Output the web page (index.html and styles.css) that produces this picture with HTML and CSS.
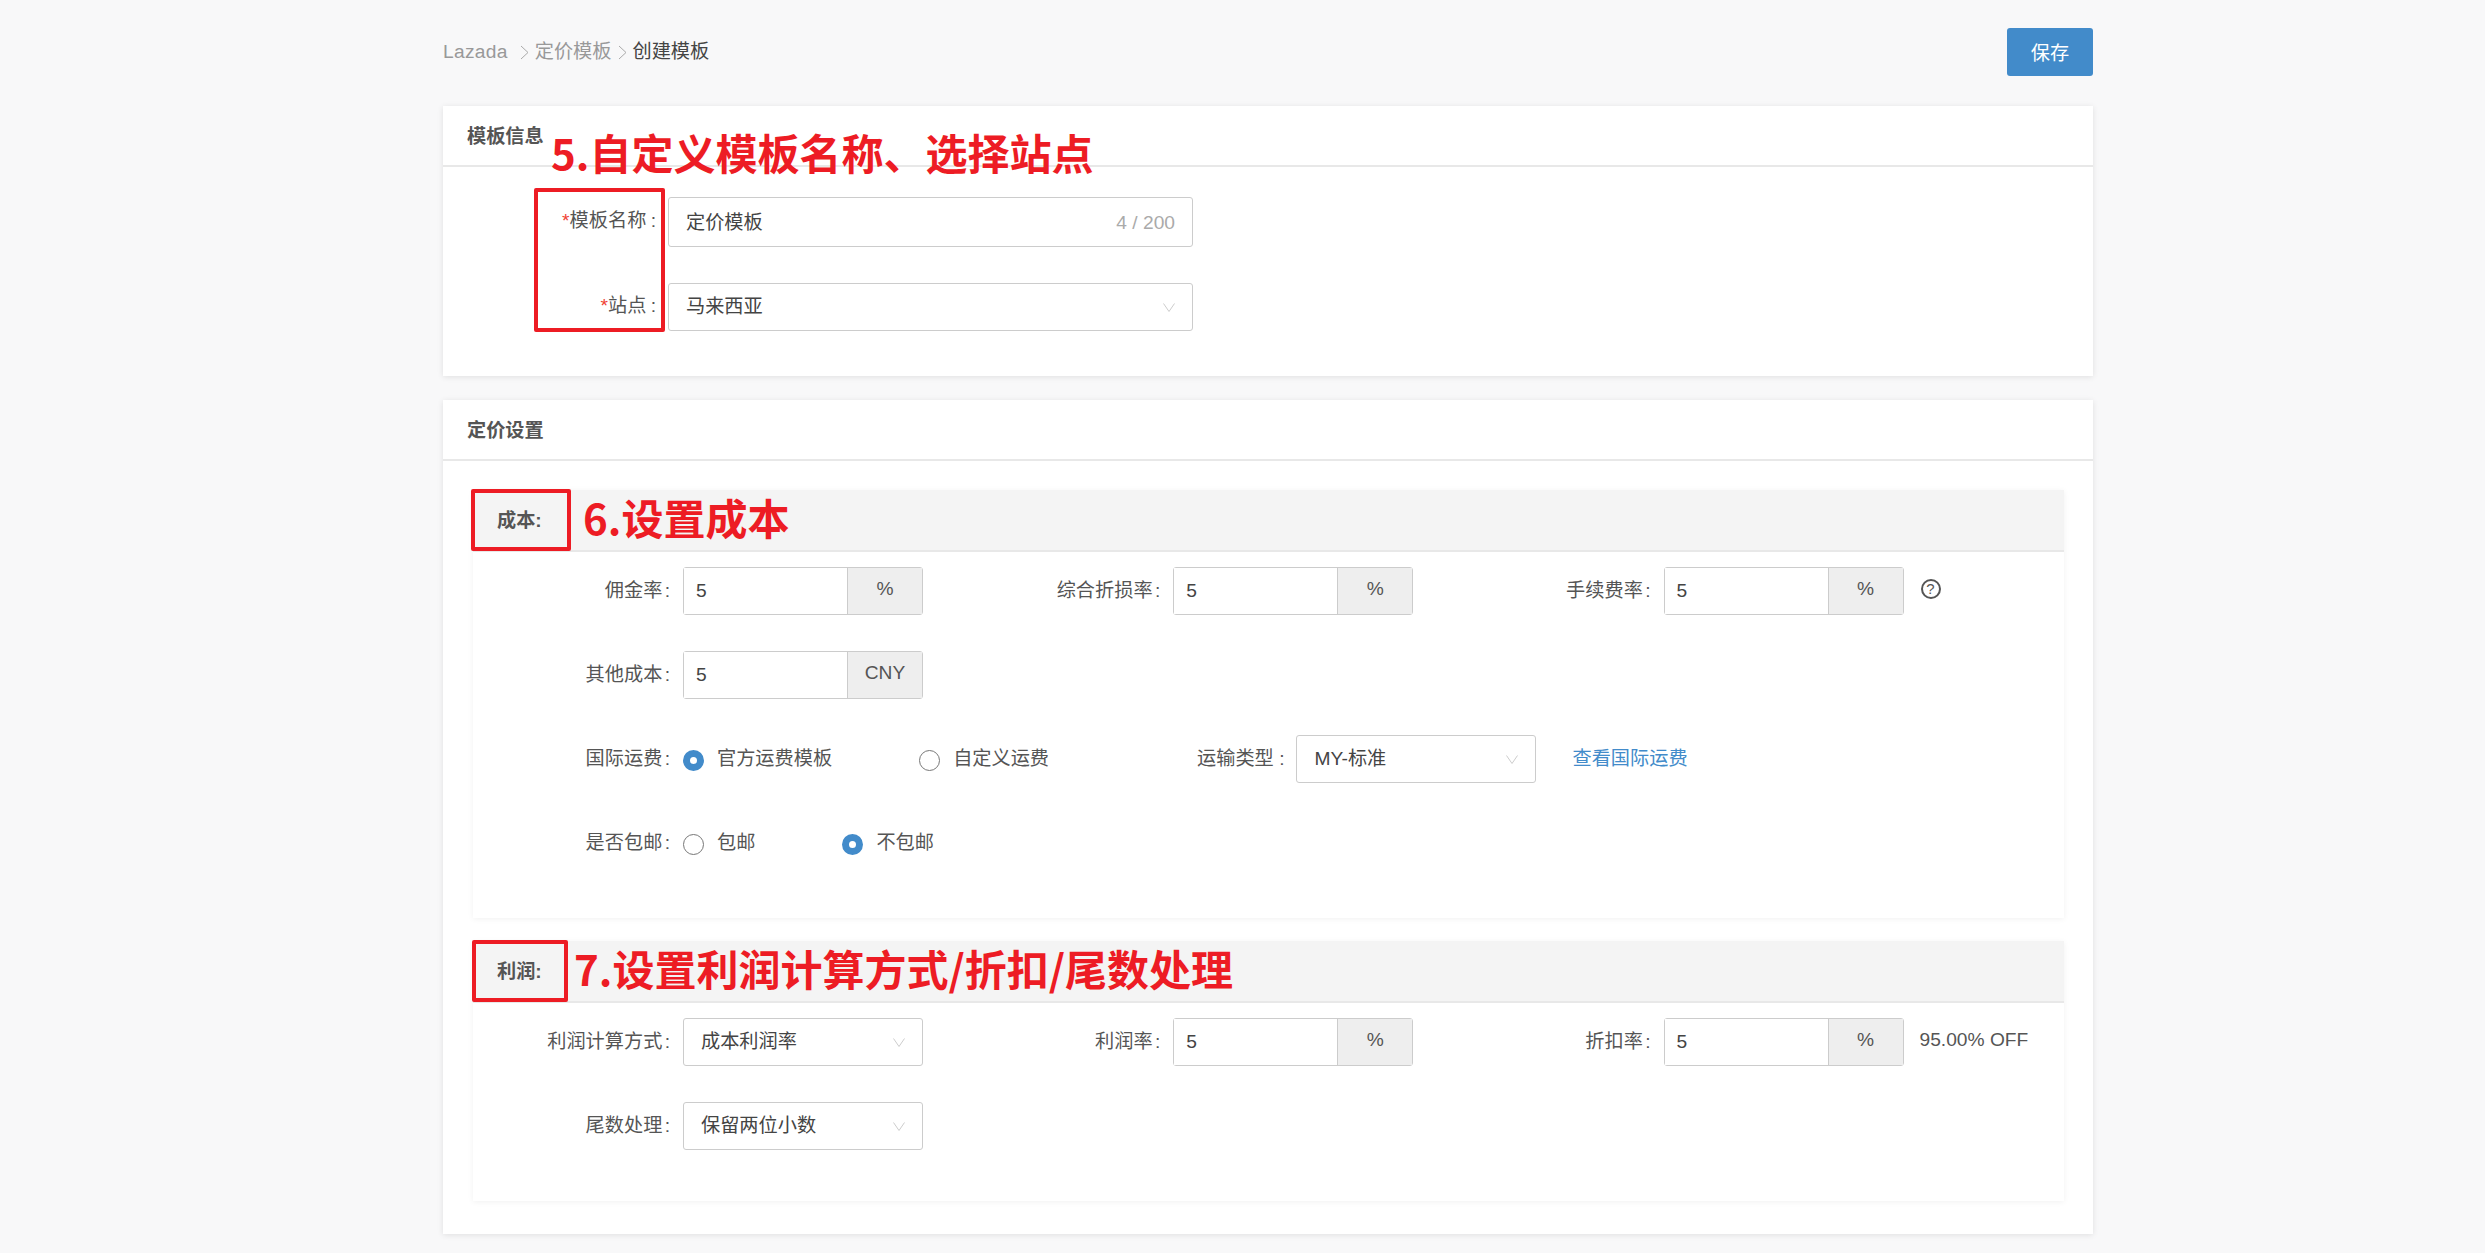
FILE: index.html
```html
<!DOCTYPE html>
<html lang="zh-CN">
  <head>
    <meta charset="UTF-8" />
    <meta name="viewport" content="width=device-width, initial-scale=1.0" />
    <title>创建模板</title>
    <link rel="stylesheet" href="styles.css">
  </head>
  <body>
    <div class="page">
      <div class="topBar">
        <div class="crumbs">
          <span class="crumb first">Lazada</span>
          <svg class="crumbSep" viewBox="0 0 9 15"><polyline points="1,1 8,7.5 1,14" /></svg>
          <span class="crumb">定价模板</span>
          <svg class="crumbSep" viewBox="0 0 9 15"><polyline points="1,1 8,7.5 1,14" /></svg>
          <span class="crumb current">创建模板</span>
        </div>
        <button class="saveBtn">保存</button>
      </div>

      <div class="card infoCard">
        <div class="cardHead">模板信息</div>
        <div class="mark markName">5.自定义模板名称、选择站点</div>
        <div class="markBox boxName"></div>
        <div class="infoBody">
          <div class="infoRow tall">
            <label class="infoLabel"><i>*</i>模板名称 :</label>
            <div class="input wide">
              <span>定价模板</span>
              <span class="counter">4 / 200</span>
            </div>
          </div>
          <div class="infoRow">
            <label class="infoLabel"><i>*</i>站点 :</label>
            <div class="select wide">
              <span>马来西亚</span>
              <svg class="arrow" viewBox="0 0 12 9"><polyline points="0.5,0.5 6,8.5 11.5,0.5" /></svg>
            </div>
          </div>
        </div>
      </div>

      <div class="card priceCard">
        <div class="cardHead">定价设置</div>
        <div class="cardBody">
          <div class="section costSection">
            <div class="sectionHead">成本:</div>
            <div class="mark markCost">6.设置成本</div>
            <div class="markBox boxCost"></div>
            <div class="sectionBody">
              <div class="row">
                <div class="field">
                  <label>佣金率 :</label>
                  <div class="group"><div class="groupValue">5</div><div class="addon">%</div></div>
                </div>
                <div class="field">
                  <label>综合折损率 :</label>
                  <div class="group"><div class="groupValue">5</div><div class="addon">%</div></div>
                </div>
                <div class="field">
                  <label>手续费率 :</label>
                  <div class="group"><div class="groupValue">5</div><div class="addon">%</div></div>
                  <span class="help">?</span>
                </div>
              </div>
              <div class="row">
                <div class="field">
                  <label>其他成本 :</label>
                  <div class="group"><div class="groupValue">5</div><div class="addon">CNY</div></div>
                </div>
              </div>
              <div class="row">
                <div class="field auto">
                  <label>国际运费 :</label>
                  <div class="radios">
                    <span class="radio checked"><b></b>官方运费模板</span>
                    <span class="radio"><b></b>自定义运费</span>
                  </div>
                  <span class="shipLabel">运输类型 :</span>
                  <div class="select">
                    <span>MY-标准</span>
                    <svg class="arrow" viewBox="0 0 12 9"><polyline points="0.5,0.5 6,8.5 11.5,0.5" /></svg>
                  </div>
                  <a class="shipLink" href="#">查看国际运费</a>
                </div>
              </div>
              <div class="row">
                <div class="field auto">
                  <label>是否包邮 :</label>
                  <div class="radios">
                    <span class="radio"><b></b>包邮</span>
                    <span class="radio checked"><b></b>不包邮</span>
                  </div>
                </div>
              </div>
            </div>
          </div>

          <div class="section profitSection">
            <div class="sectionHead">利润:</div>
            <div class="mark markProfit">7.设置利润计算方式/折扣/尾数处理</div>
            <div class="markBox boxProfit"></div>
            <div class="sectionBody">
              <div class="row">
                <div class="field">
                  <label>利润计算方式 :</label>
                  <div class="select">
                    <span>成本利润率</span>
                    <svg class="arrow" viewBox="0 0 12 9"><polyline points="0.5,0.5 6,8.5 11.5,0.5" /></svg>
                  </div>
                </div>
                <div class="field">
                  <label>利润率 :</label>
                  <div class="group"><div class="groupValue">5</div><div class="addon">%</div></div>
                </div>
                <div class="field">
                  <label>折扣率 :</label>
                  <div class="group"><div class="groupValue">5</div><div class="addon">%</div></div>
                  <span class="offText">95.00% OFF</span>
                </div>
              </div>
              <div class="row">
                <div class="field">
                  <label>尾数处理 :</label>
                  <div class="select">
                    <span>保留两位小数</span>
                    <svg class="arrow" viewBox="0 0 12 9"><polyline points="0.5,0.5 6,8.5 11.5,0.5" /></svg>
                  </div>
                </div>
              </div>
            </div>
          </div>
        </div>
      </div>
    </div>
  </body>
</html>
```
FILE: styles.css
```css
* {
  box-sizing: border-box;
}
body {
  margin: 0;
  background-color: #f8f8f9;
  color: #555555;
  font-family: "Liberation Sans", "Noto Sans CJK SC", sans-serif;
  font-size: 19.2px;
  line-height: 28px;
}
.page {
  width: 1650px;
  margin-left: 443px;
  padding-bottom: 19px;
}

/* top bar */
.topBar {
  display: flex;
  justify-content: space-between;
  align-items: center;
  padding: 28px 0 30px;
}
.crumbs {
  display: flex;
  align-items: center;
}
.crumb {
  color: #999999;
  margin-right: 6px;
}
.crumb.first {
  margin-right: 12px;
  letter-spacing: 0.3px;
}
.crumb.current {
  color: #444444;
}
.crumbSep {
  width: 9px;
  height: 15px;
  margin-right: 6px;
  fill: none;
  stroke: #aaaaaa;
  stroke-width: 1;
}
.saveBtn {
  width: 86px;
  height: 48px;
  border: none;
  border-radius: 3px;
  background-color: #428bca;
  color: #ffffff;
  font-family: inherit;
  font-size: 19.2px;
}

/* cards */
.card {
  position: relative;
  background-color: #ffffff;
  box-shadow: 0 1px 6px rgba(0, 0, 0, 0.1);
}
.infoCard {
  height: 270px;
  margin-bottom: 24px;
}
.cardHead {
  height: 61px;
  padding: 17px 24px 0;
  border-bottom: 2px solid #e8e8e8;
  color: #555555;
  font-weight: 700;
}
.cardBody {
  padding: 29px 29px 33px 30px;
}
.infoBody {
  padding-top: 30px;
}
.infoRow {
  display: flex;
  align-items: center;
  gap: 12px;
}
.infoRow.tall {
  margin-bottom: 36px;
}
.infoLabel {
  width: 213px;
  margin-bottom: 3px;
  text-align: right;
  word-spacing: -1px;
}
.infoLabel i {
  color: #f04134;
  font-style: normal;
}

/* controls */
.input,
.select {
  display: flex;
  flex: none;
  justify-content: space-between;
  align-items: center;
  width: 240px;
  height: 48px;
  padding: 0 17px;
  border: 1px solid #cccccc;
  border-radius: 3px;
  background-color: #ffffff;
  color: #444444;
}
.input.wide,
.select.wide {
  width: 525px;
}
.input.wide {
  height: 50px;
  padding-top: 2px;
}
.counter {
  color: #aaaaaa;
}
.arrow {
  width: 12px;
  height: 9px;
  fill: none;
  stroke: #cccccc;
  stroke-width: 1;
}
.group {
  display: flex;
  flex: none;
  width: 240px;
  height: 48px;
  border: 1px solid #cccccc;
  border-radius: 3px;
}
.groupValue {
  flex: 1;
  padding-left: 12px;
  background-color: #ffffff;
  color: #444444;
  line-height: 46px;
}
.addon {
  width: 75px;
  border-left: 1px solid #cccccc;
  background-color: #eeeeee;
  text-align: center;
  line-height: 42px;
}

/* sections */
.section {
  position: relative;
  width: 1591px;
  background-color: #ffffff;
  box-shadow: 0 1px 6px rgba(0, 0, 0, 0.06);
}
.costSection {
  height: 428px;
  margin-bottom: 23px;
}
.profitSection {
  height: 260px;
}
.sectionHead {
  height: 62px;
  padding: 17px 0 0 24px;
  border-bottom: 2px solid #e8e8e8;
  background-color: #f4f4f4;
  font-weight: 700;
}
.sectionBody {
  display: flex;
  flex-direction: column;
  gap: 36px;
  padding-top: 15px;
}
.row {
  display: flex;
  height: 48px;
}
.field {
  display: flex;
  flex: none;
  align-items: center;
  width: 490.25px;
  white-space: nowrap;
}
.field.auto {
  width: auto;
}
.field label {
  flex: none;
  width: 197px;
  margin-right: 13px;
  text-align: right;
  word-spacing: -3px;
}
.radios {
  display: flex;
  gap: 87px;
}
.radio {
  display: flex;
  align-items: center;
  gap: 13px;
}
.radio b {
  width: 21px;
  height: 21px;
  margin-top: 2px;
  border: 1px solid #777777;
  border-radius: 50%;
  background-color: #ffffff;
}
.radio.checked b {
  border: 7px solid #428bca;
}
.shipLabel {
  margin-left: 148px;
  margin-right: 12px;
}
.shipLink {
  margin-left: 36px;
  color: #428bca;
  text-decoration: none;
}
.help {
  flex: none;
  width: 20px;
  height: 20px;
  margin: -4px 0 0 17px;
  border: 2px solid #555555;
  border-radius: 50%;
  font-size: 15px;
  line-height: 16px;
  text-align: center;
}
.offText {
  margin: -4px 0 0 16px;
}

/* red annotations laid over the form */
.mark {
  position: absolute;
  color: #ed1c24;
  font-family: "Noto Sans CJK SC", sans-serif;
  font-size: 42px;
  font-weight: 700;
  line-height: 56px;
  white-space: nowrap;
}
.markName {
  top: 18px;
  left: 108px;
}
.markCost {
  top: -1px;
  left: 110px;
}
.markProfit {
  top: -1px;
  left: 101px;
}
.markBox {
  position: absolute;
  border: 4px solid #ed1c24;
  border-radius: 2px;
}
.boxName {
  top: 82px;
  left: 91px;
  width: 131px;
  height: 144px;
}
.boxCost {
  top: -1px;
  left: -2px;
  width: 100px;
  height: 62px;
}
.boxProfit {
  top: -1px;
  left: -1px;
  width: 96px;
  height: 62px;
}
```
